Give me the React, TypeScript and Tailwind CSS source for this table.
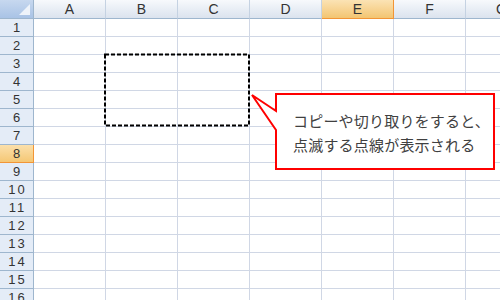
const COLS = ['A', 'B', 'C', 'D', 'E', 'F', 'G'];
const ROWS = Array.from({ length: 16 }, (_, i) => i + 1);

const headFont = { fontFamily: '"Liberation Sans", Arial, sans-serif' };

function ColHeader({ label }: { label: string }) {
  const active = label === 'E';
  return (
    <div
      className={
        active
          ? 'flex h-[19px] items-center justify-center border-r border-b border-r-[#f29536] border-b-[#f29536] bg-gradient-to-b from-[#fbe3b4] to-[#f3c571] text-[14px] text-[#333]'
          : 'flex h-[19px] items-center justify-center border-r border-b border-r-[#c5d2e2] border-b-[#9eb6ce] bg-gradient-to-b from-[#f7f9fc] to-[#dbe3ee] text-[14px] text-[#333]'
      }
    >
      {label}
    </div>
  );
}

function RowHeader({ n }: { n: number }) {
  const active = n === 8;
  return (
    <div
      className={
        active
          ? 'flex h-[18px] items-center justify-center border-r border-b border-r-[#f29536] border-b-[#f29536] bg-gradient-to-b from-[#fbe0ab] to-[#f5c774] pl-[2px] text-[13px] tracking-[2px] text-[#333]'
          : 'flex h-[18px] items-center justify-center border-r border-b border-r-[#9eb6ce] border-b-[#9eb6ce] bg-[#e4ecf7] pl-[2px] text-[13px] tracking-[2px] text-[#333]'
      }
    >
      {n}
    </div>
  );
}

export default function App() {
  return (
    <div className="relative h-[300px] w-[500px] overflow-hidden bg-white" style={headFont}>
      <div className="grid w-[538px] grid-cols-[34px_repeat(7,72px)]">
        <div className="relative h-[19px] border-r border-b border-r-[#9eb6ce] border-b-[#9eb6ce] bg-gradient-to-b from-[#c7d8ef] to-[#a9c3e6]">
          <svg className="absolute right-[3px] bottom-[3px]" width="11" height="11" viewBox="0 0 11 11">
            <polygon points="11,0 11,11 0,11" fill="#eef3fa" />
          </svg>
        </div>
        {COLS.map((c) => (
          <ColHeader key={c} label={c} />
        ))}
        {ROWS.map((r) => (
          <div key={r} className="contents">
            <RowHeader n={r} />
            {COLS.map((c) => (
              <div key={c} className="h-[18px] border-r border-b border-[#d0d7e5]" />
            ))}
          </div>
        ))}
      </div>

      {/* marching ants around B3:C6 and the callout */}
      <svg className="absolute top-0 left-0" width="500" height="300">
        <rect
          x="105"
          y="54.5"
          width="144"
          height="71"
          fill="none"
          stroke="#000"
          strokeWidth="2"
          strokeDasharray="4 2"
        />
        <path
          d="M276 94 H494 V169 H276 V130 L252 95 L276 111 Z"
          fill="#fff"
          stroke="#ff0000"
          strokeWidth="2"
          strokeLinejoin="miter"
        />
      </svg>

      <div
        className="absolute top-[109px] left-[293px] text-[15px] leading-[24px] tracking-[0.2px] text-[#404040]"
        style={{ fontFamily: '"Noto Sans CJK JP", sans-serif' }}
      >
        <div>コピーや切り取りをすると、</div>
        <div>点滅する点線が表示される</div>
      </div>
    </div>
  );
}
